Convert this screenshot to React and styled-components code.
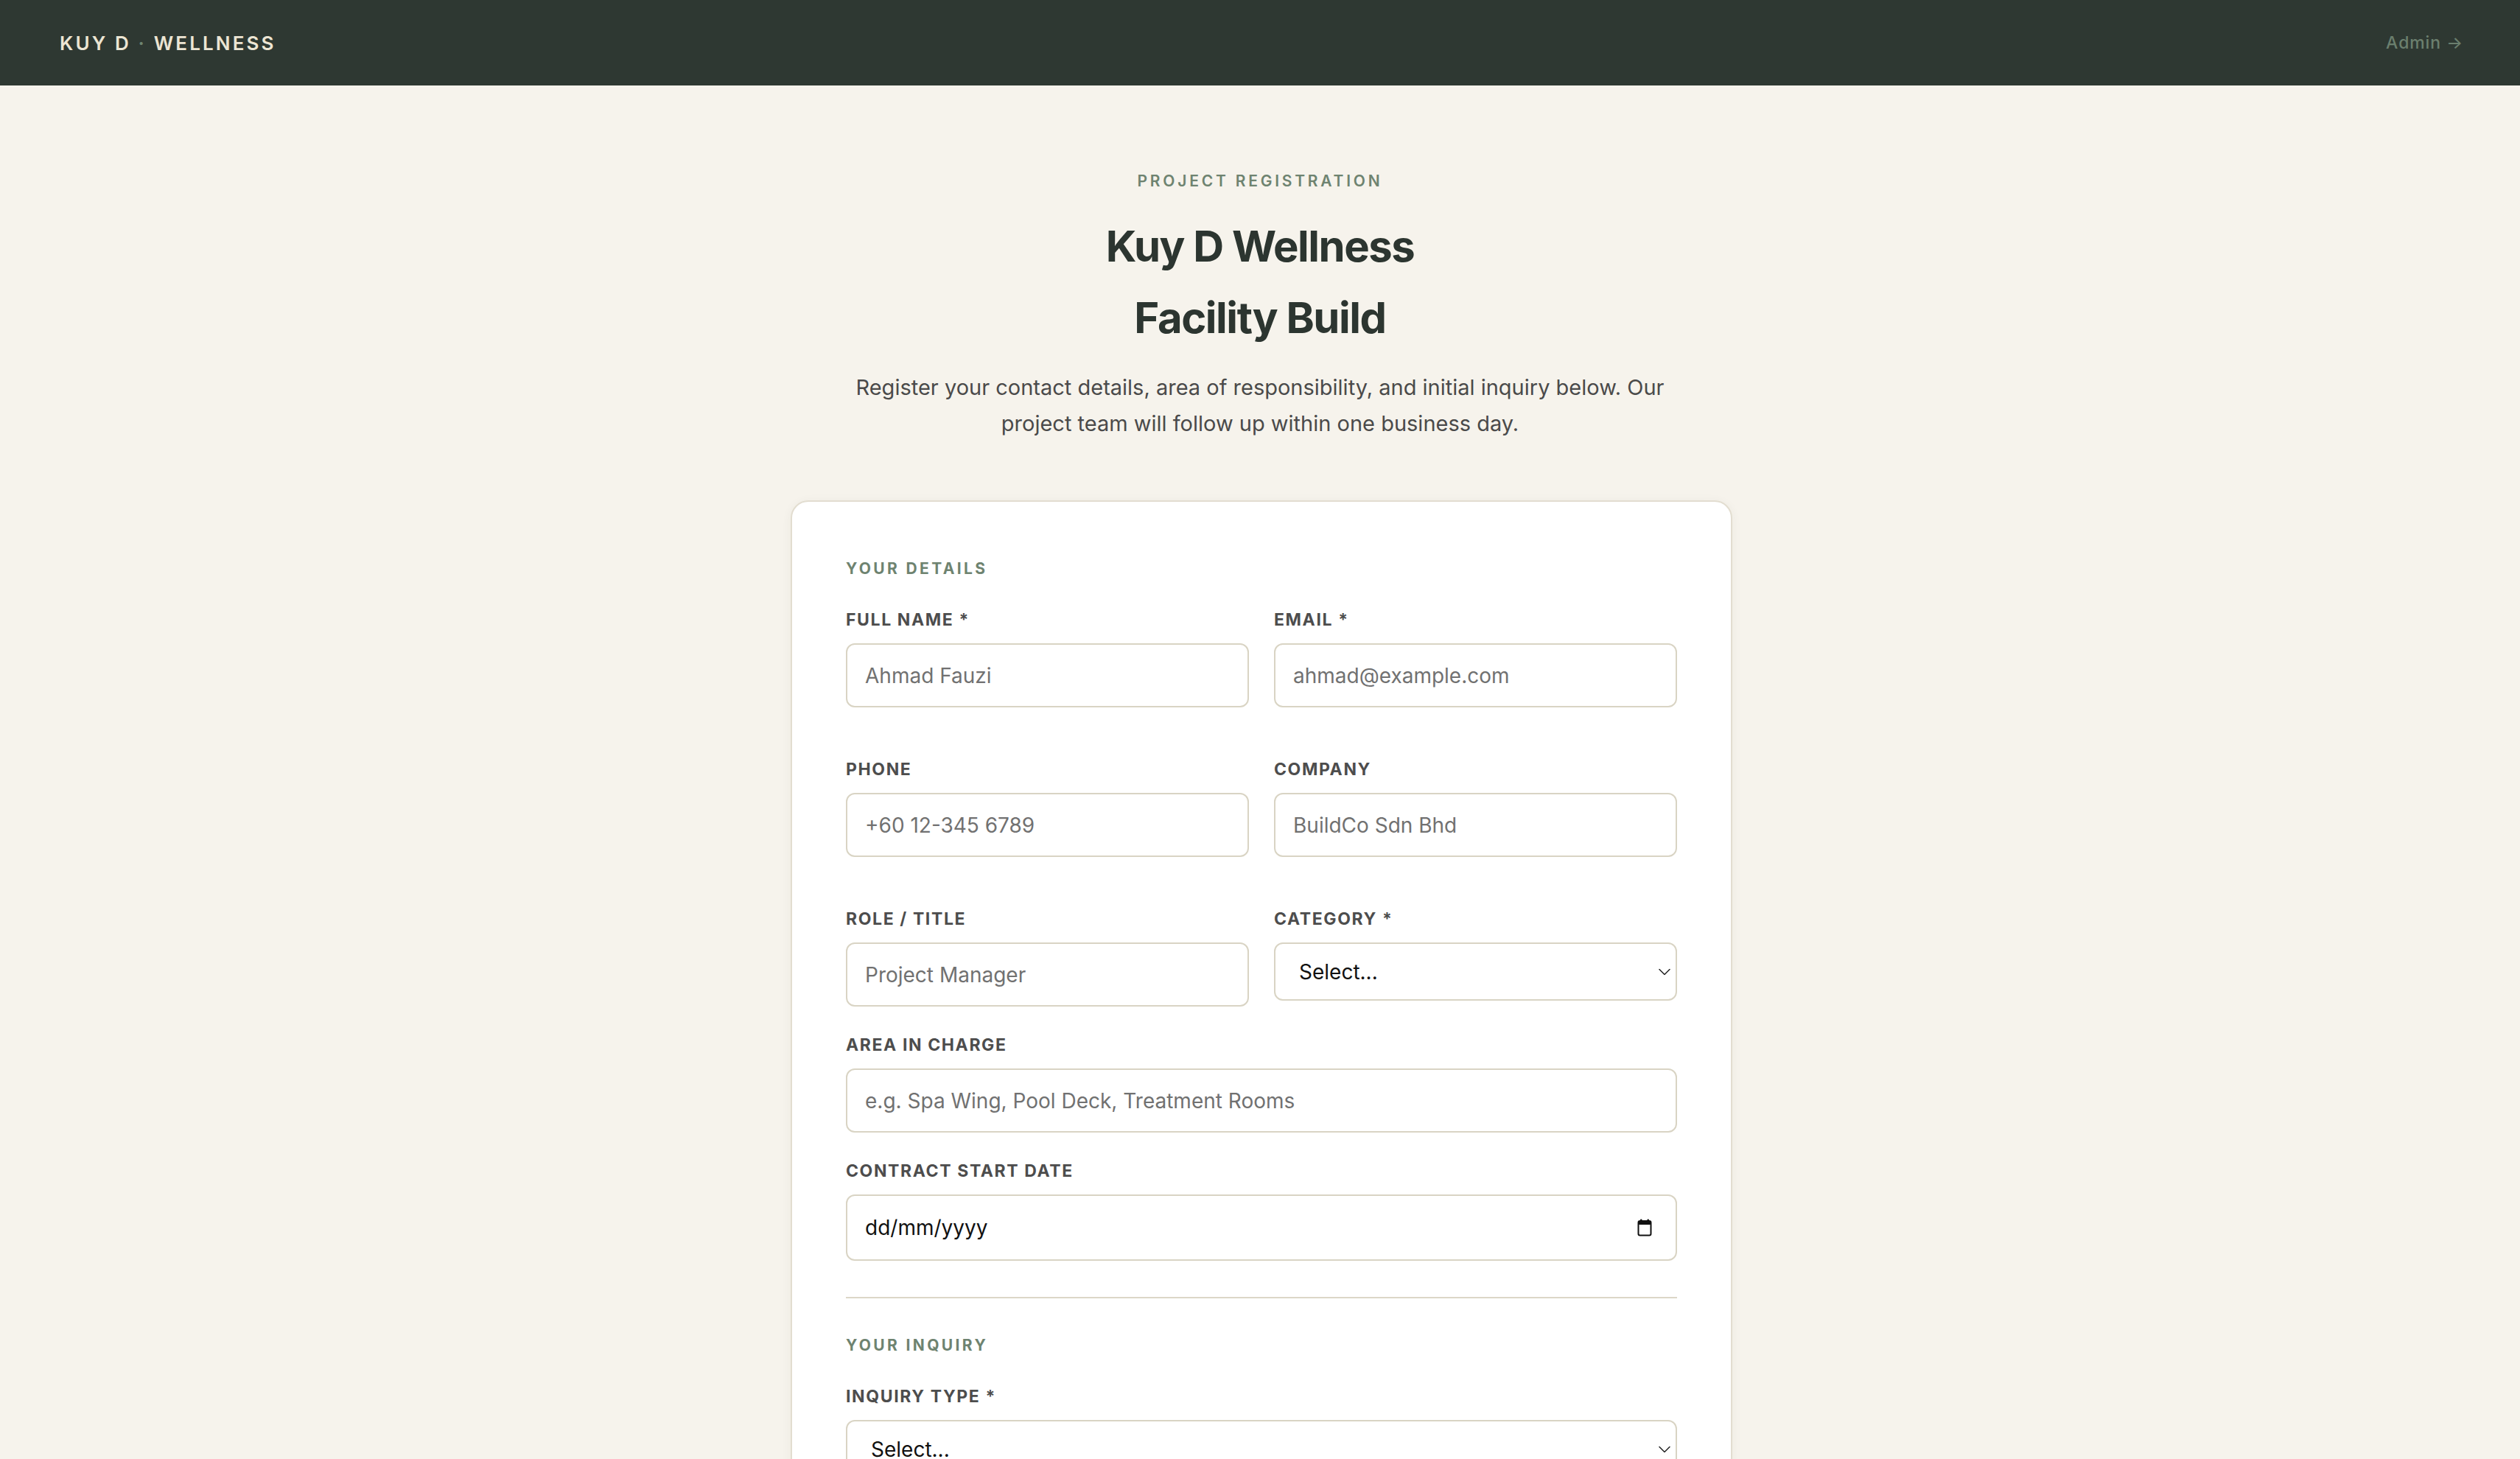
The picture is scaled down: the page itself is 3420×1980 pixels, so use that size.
import styled, { createGlobalStyle } from "styled-components";

const GlobalStyle = createGlobalStyle`
  * {
    box-sizing: border-box;
  }
  html {
    scrollbar-width: none;
  }
  html::-webkit-scrollbar {
    display: none;
  }
  body {
    margin: 0;
    background: #f6f3ec;
    font-family: Inter, "Liberation Sans", sans-serif;
    color: #2d3630;
  }
`;

function Chevron() {
  return (
    <svg width="16" height="9" viewBox="0 0 16 9" fill="none">
      <path
        d="M1 1l7 7 7-7"
        stroke="#222"
        strokeWidth="1.5"
        strokeLinecap="round"
        strokeLinejoin="round"
      />
    </svg>
  );
}

function CalendarIcon() {
  return (
    <svg width="22" height="24" viewBox="0 0 22 24" fill="none">
      <rect x="5" y="0.5" width="2.5" height="4" rx="1" fill="#111" />
      <rect x="14.5" y="0.5" width="2.5" height="4" rx="1" fill="#111" />
      <rect x="2.5" y="3" width="17" height="19.5" rx="2.2" stroke="#111" strokeWidth="2" />
      <rect x="2.5" y="3" width="17" height="5" rx="1.5" fill="#111" />
    </svg>
  );
}

const categories = ["Contractor", "Consultant", "Supplier", "Client Representative"];
const inquiryTypes = ["General", "Site Access", "Documentation", "Scheduling"];

export default function App() {
  return (
    <>
      <GlobalStyle />
      <TopBar>
        <Brand>
          KUY D <BrandDot>·</BrandDot> WELLNESS
        </Brand>
        <AdminLink href="#admin">Admin →</AdminLink>
      </TopBar>

      <Main>
        <Eyebrow>Project Registration</Eyebrow>
        <Title>
          Kuy D Wellness
          <br />
          Facility Build
        </Title>
        <Lead>
          Register your contact details, area of responsibility, and initial
          inquiry below. Our project team will follow up within one business day.
        </Lead>

        <Card>
          <SectionTitle>Your details</SectionTitle>
          <Stack>
            <TwoCol>
              <Field>
                <Label>Full name *</Label>
                <TextInput placeholder="Ahmad Fauzi" />
              </Field>
              <Field>
                <Label>Email *</Label>
                <TextInput type="email" placeholder="ahmad@example.com" />
              </Field>
              <Field>
                <Label>Phone</Label>
                <TextInput placeholder="+60 12-345 6789" />
              </Field>
              <Field>
                <Label>Company</Label>
                <TextInput placeholder="BuildCo Sdn Bhd" />
              </Field>
              <Field>
                <Label>Role / Title</Label>
                <TextInput placeholder="Project Manager" />
              </Field>
              <Field>
                <Label>Category *</Label>
                <SelectWrap>
                  <Select defaultValue="">
                    <option value="">Select...</option>
                    {categories.map((c) => (
                      <option key={c}>{c}</option>
                    ))}
                  </Select>
                  <SelectArrow>
                    <Chevron />
                  </SelectArrow>
                </SelectWrap>
              </Field>
            </TwoCol>

            <Field>
              <Label>Area in charge</Label>
              <TextInput placeholder="e.g. Spa Wing, Pool Deck, Treatment Rooms" />
            </Field>

            <Field>
              <Label>Contract start date</Label>
              <SelectWrap>
                <TextInput $tall $dark placeholder="dd/mm/yyyy" readOnly />
                <DateIcon>
                  <CalendarIcon />
                </DateIcon>
              </SelectWrap>
            </Field>
          </Stack>

          <Divider />

          <SectionTitle>Your inquiry</SectionTitle>
          <Stack>
            <Field>
              <Label>Inquiry type *</Label>
              <SelectWrap>
                <Select defaultValue="">
                  <option value="">Select...</option>
                  {inquiryTypes.map((t) => (
                    <option key={t}>{t}</option>
                  ))}
                </Select>
                <SelectArrow>
                  <Chevron />
                </SelectArrow>
              </SelectWrap>
            </Field>
            <Field>
              <Label>Message *</Label>
              <TextArea placeholder="Describe your inquiry..." />
            </Field>
            <SubmitButton type="button">Submit registration</SubmitButton>
          </Stack>
        </Card>
      </Main>
    </>
  );
}

const TopBar = styled.header`
  display: flex;
  align-items: center;
  justify-content: space-between;
  height: 116px;
  padding: 0 77px 0 81px;
  background: #2e3832;
`;

const Brand = styled.div`
  font-size: 26px;
  font-weight: 600;
  letter-spacing: 0.12em;
  color: #ece5d3;
  white-space: pre;
`;

const BrandDot = styled.span`
  color: #6f8571;
`;

const AdminLink = styled.a`
  font-size: 23px;
  font-weight: 500;
  letter-spacing: 0.04em;
  color: #6b7f6e;
  text-decoration: none;
`;

const Main = styled.main`
  display: flex;
  flex-direction: column;
  align-items: center;
  padding: 114px 0 120px;
`;

const Eyebrow = styled.div`
  font-size: 21px;
  font-weight: 600;
  line-height: 31px;
  letter-spacing: 0.18em;
  text-transform: uppercase;
  color: #6e8370;
`;

const Title = styled.h1`
  margin: 25px 0 0;
  font-size: 58px;
  font-weight: 700;
  line-height: 97px;
  letter-spacing: -0.025em;
  text-align: center;
  color: #2c3530;
`;

const Lead = styled.p`
  margin: 21px 0 0;
  max-width: 1160px;
  font-size: 29px;
  line-height: 49px;
  text-align: center;
  color: #4a4a4a;
`;

const Card = styled.section`
  width: 1278px;
  margin: 80px 0 0 4px;
  padding: 77px 73px 73px;
  background: #fff;
  border: 2px solid #e2ddd0;
  border-radius: 24px;
  box-shadow: 0 2px 14px rgba(60, 55, 40, 0.05);
`;

const SectionTitle = styled.h2`
  margin: 0 0 41px;
  font-size: 21px;
  font-weight: 700;
  line-height: 27px;
  letter-spacing: 0.16em;
  text-transform: uppercase;
  color: #6e8370;
`;

const Stack = styled.div`
  display: flex;
  flex-direction: column;
  gap: 37px;
`;

const TwoCol = styled.div`
  display: grid;
  grid-template-columns: 1fr 1fr;
  column-gap: 34px;
  row-gap: 69px;
  align-items: start;
`;

const Field = styled.div`
  display: flex;
  flex-direction: column;
`;

const Label = styled.label`
  margin-bottom: 17px;
  font-size: 23px;
  font-weight: 700;
  line-height: 30px;
  letter-spacing: 0.07em;
  text-transform: uppercase;
  color: #4d4d4d;
`;

const TextInput = styled.input`
  width: 100%;
  height: ${(p) => (p.$tall ? "90px" : "87px")};
  padding: 0 24px;
  border: 2px solid #d9d4c4;
  border-radius: 12px;
  background: #fff;
  font-family: inherit;
  font-size: 28px;
  color: #222;
  outline: none;

  &::placeholder {
    color: ${(p) => (p.$dark ? "#111" : "#717171")};
  }
`;

const SelectWrap = styled.div`
  position: relative;
  display: flex;
`;

const Select = styled.select`
  width: 100%;
  height: 79px;
  padding: 0 48px 0 32px;
  border: 2px solid #d9d4c4;
  border-radius: 12px;
  background: #fff;
  appearance: none;
  font-family: inherit;
  font-size: 28px;
  color: #111;
  outline: none;
`;

const SelectArrow = styled.span`
  position: absolute;
  top: 50%;
  right: 9px;
  display: flex;
  transform: translateY(-50%);
  pointer-events: none;
`;

const DateIcon = styled.span`
  position: absolute;
  top: 50%;
  right: 33px;
  display: flex;
  transform: translateY(-50%);
  pointer-events: none;
`;

const Divider = styled.hr`
  height: 2px;
  margin: 49px 0 50px;
  border: 0;
  background: #dcd7c8;
`;

const TextArea = styled.textarea`
  height: 220px;
  padding: 22px 24px;
  border: 2px solid #d9d4c4;
  border-radius: 12px;
  font-family: inherit;
  font-size: 28px;
  resize: vertical;
  outline: none;

  &::placeholder {
    color: #717171;
  }
`;

const SubmitButton = styled.button`
  height: 96px;
  border: 0;
  border-radius: 12px;
  background: #2e3832;
  font-family: inherit;
  font-size: 26px;
  font-weight: 600;
  letter-spacing: 0.08em;
  text-transform: uppercase;
  color: #ece5d3;
`;
